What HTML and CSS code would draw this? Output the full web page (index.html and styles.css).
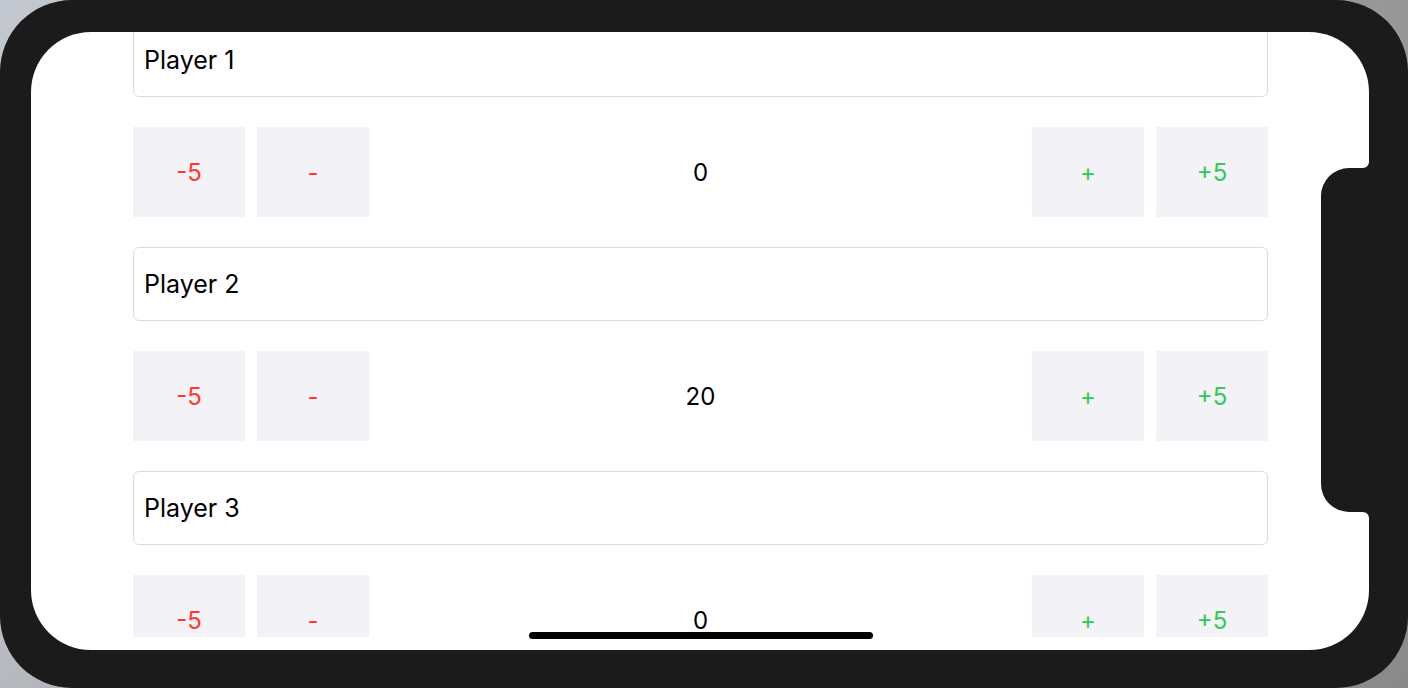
FILE: index.html
```html
<!DOCTYPE html>
<html>
<head>
<meta charset="utf-8">
<link rel="stylesheet" href="styles.css">
</head>
<body>
<div class="device">
  <div class="screen">
    <div class="viewport">
      <div class="list">
        <div class="player">
          <div class="name-field">Player 1</div>
          <div class="controls">
            <div class="btn minus">-5</div>
            <div class="btn minus">-</div>
            <div class="score">0</div>
            <div class="btn plus">+</div>
            <div class="btn plus">+5</div>
          </div>
        </div>
        <div class="player">
          <div class="name-field">Player 2</div>
          <div class="controls">
            <div class="btn minus">-5</div>
            <div class="btn minus">-</div>
            <div class="score">20</div>
            <div class="btn plus">+</div>
            <div class="btn plus">+5</div>
          </div>
        </div>
        <div class="player">
          <div class="name-field">Player 3</div>
          <div class="controls">
            <div class="btn minus">-5</div>
            <div class="btn minus">-</div>
            <div class="score">0</div>
            <div class="btn plus">+</div>
            <div class="btn plus">+5</div>
          </div>
        </div>
      </div>
    </div>
    <svg class="notch" width="48" height="356" viewBox="0 0 48 356">
      <path d="M48 0 A6 6 0 0 1 42 6 L28 6 A28 28 0 0 0 0 34 L0 322 A28 28 0 0 0 28 350 L42 350 A6 6 0 0 1 48 356 Z" fill="#1b1b1b"/>
    </svg>
    <div class="home-indicator"></div>
  </div>
</div>
</body>
</html>
```
FILE: styles.css
```css
html, body {
  margin: 0;
  padding: 0;
}
body {
  width: 1408px;
  height: 688px;
  overflow: hidden;
  background: linear-gradient(135deg, #c3c7cf 0%, #b9bcc2 30%, #9a9a9a 60%, #8a8a8a 100%);
  font-family: Inter, "Noto Sans", "Liberation Sans", sans-serif;
}
.device {
  box-sizing: border-box;
  width: 1408px;
  height: 688px;
  background: #1b1b1b;
  border-radius: 72px;
  padding: 32px 39px 38px 31px;
}
.screen {
  position: relative;
  width: 1338px;
  height: 618px;
  background: #ffffff;
  border-radius: 60px;
  overflow: hidden;
}
.viewport {
  height: 605px;
  overflow: hidden;
  padding: 0 101px 0 102px;
}
.list {
  margin-top: -9px;
  display: flex;
  flex-direction: column;
}
.player {
  display: flex;
  flex-direction: column;
  gap: 30px;
  margin-bottom: 30px;
}
.name-field {
  box-sizing: border-box;
  height: 74px;
  border: 1px solid #dcdcdf;
  border-radius: 6px;
  padding-left: 10px;
  display: flex;
  align-items: center;
  font-size: 25px;
  color: #000;
}
.controls {
  display: flex;
  gap: 12px;
  height: 90px;
}
.btn {
  width: 112px;
  background: #f2f2f7;
  display: flex;
  align-items: center;
  justify-content: center;
  font-size: 24px;
}
.minus { color: #ff3b30; }
.plus { color: #34c759; }
.score {
  flex: 1;
  display: flex;
  align-items: center;
  justify-content: center;
  font-size: 24px;
  color: #000;
}
.notch {
  position: absolute;
  right: 0;
  top: 130px;
  display: block;
}
.home-indicator {
  position: absolute;
  left: 498px;
  top: 600px;
  width: 344px;
  height: 7px;
  border-radius: 4px;
  background: #000;
}
```
